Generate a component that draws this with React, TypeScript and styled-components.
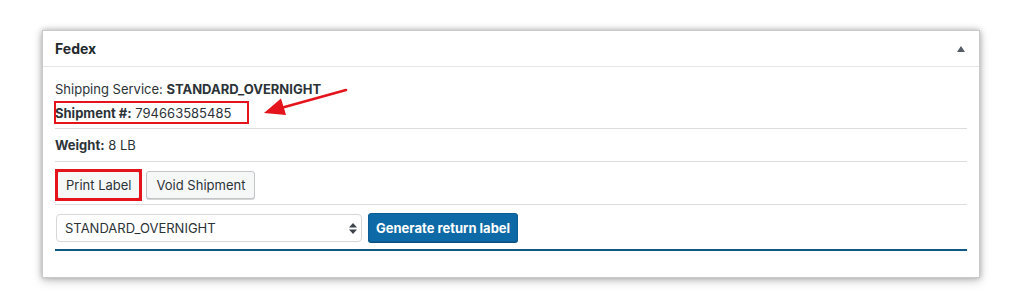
import React from "react"
import styled, { createGlobalStyle } from "styled-components"

const GlobalStyle = createGlobalStyle`
  html, body {
    margin: 0;
    padding: 0;
    background: #ffffff;
  }
  body {
    font-family: Inter, "Noto Sans", "Liberation Sans", sans-serif;
    font-size: 13px;
    color: #2c3338;
  }
`

const Page = styled.div`
  width: 1020px;
  height: 308px;
  padding: 30px 0 0 42px;
  box-sizing: border-box;
`

const Postbox = styled.div`
  width: 938px;
  box-sizing: border-box;
  background: #fff;
  border: 1px solid #c9c9c9;
  box-shadow: 0 0 6px rgba(0, 0, 0, 0.28), 0 3px 10px rgba(0, 0, 0, 0.18);
`

const Header = styled.div`
  height: 35px;
  display: flex;
  align-items: center;
  justify-content: space-between;
  padding: 0 14px 0 12px;
  border-bottom: 1px solid #e2e4e7;
`

const Title = styled.h2`
  margin: 0;
  font-size: 14px;
  font-weight: 700;
  color: #23282d;
`

const Toggle = styled.span`
  width: 0;
  height: 0;
  border-left: 4px solid transparent;
  border-right: 4px solid transparent;
  border-bottom: 6px solid #555d66;
`

const Inside = styled.div`
  padding: 0 12px 26px;
`

const Section = styled.div<{ $top: number; $bottom: number }>`
  position: relative;
  padding: ${(p) => p.$top}px 0 ${(p) => p.$bottom}px;
  border-bottom: 1px solid #dcdcde;
`

const Line = styled.div`
  line-height: 24px;
  height: 24px;
`

const Mark = styled.span`
  position: relative;
  display: inline-block;

  &::after {
    content: "";
    position: absolute;
    left: -1px;
    right: -18px;
    top: 0;
    bottom: 1px;
    border: 2.5px solid #e5141c;
  }
`

const Arrow = styled.svg`
  position: absolute;
  left: 200px;
  top: 18px;
  overflow: visible;
`

const ButtonRow = styled.div`
  display: flex;
  align-items: center;
  gap: 6px;
`

const Button = styled.button<{ $marked?: boolean }>`
  position: relative;
  height: 28px;
  padding: 0 9px;
  font-family: inherit;
  font-size: 13px;
  color: #2c3338;
  background: #f6f7f7;
  border: 1px solid #c3c4c7;
  border-radius: 3px;
  box-shadow: 0 1px 0 #d5d5d5;

  ${(p) =>
    p.$marked &&
    `
    margin-left: 2px;
    padding: 0 8px;
    &::after {
      content: "";
      position: absolute;
      inset: -3px -3px -3px -3px;
      border: 3px solid #e5141c;
    }
  `}
`

const ReturnRow = styled.div`
  display: flex;
  align-items: center;
  gap: 6px;
  padding-top: 8px;
  padding-bottom: 7px;
  border-bottom: 2px solid #11598a;
`

const SelectWrap = styled.div`
  position: relative;
  margin-left: 1px;
`

const Select = styled.select`
  appearance: none;
  width: 306px;
  height: 28px;
  padding: 0 24px 0 8px;
  font-family: inherit;
  font-size: 13px;
  color: #2c3338;
  background: #fff;
  border: 1px solid #d7d7d7;
  border-radius: 4px;
`

const Spinner = styled.svg`
  position: absolute;
  right: 5px;
  top: 9px;
  pointer-events: none;
`

const PrimaryButton = styled.button`
  height: 29px;
  padding: 0 7px;
  font-family: inherit;
  font-size: 13px;
  font-weight: 700;
  color: #fff;
  background: #0e6aa6;
  border: 1px solid #0b5d93;
  border-radius: 3px;
  box-shadow: 0 1px 0 #0a4f7d;
`

const App: React.FC = () => {
  return (
    <>
      <GlobalStyle />
      <Page>
        <Postbox>
          <Header>
            <Title>Fedex</Title>
            <Toggle />
          </Header>
          <Inside>
            <Section $top={10} $bottom={3}>
              <Line>
                Shipping Service: <strong>STANDARD_OVERNIGHT</strong>
              </Line>
              <Line>
                <Mark>
                  <strong>Shipment #:</strong> 794663585485
                </Mark>
              </Line>
              <Arrow width="150" height="35" viewBox="0 0 150 35">
                <line x1="91" y1="5" x2="26" y2="23" stroke="#e5141c" strokeWidth="2.5" strokeLinecap="round" />
                <polygon points="9,28 31,30 26,13.5" fill="#e5141c" />
              </Arrow>
            </Section>
            <Section $top={4} $bottom={4}>
              <Line>
                <strong>Weight:</strong> 8 LB
              </Line>
            </Section>
            <Section $top={9} $bottom={5}>
              <ButtonRow>
                <Button $marked>Print Label</Button>
                <Button>Void Shipment</Button>
              </ButtonRow>
            </Section>
            <ReturnRow>
              <SelectWrap>
                <Select defaultValue="STANDARD_OVERNIGHT">
                  <option>STANDARD_OVERNIGHT</option>
                  <option>PRIORITY_OVERNIGHT</option>
                  <option>FEDEX_GROUND</option>
                </Select>
                <Spinner width="8" height="11" viewBox="0 0 8 11">
                  <polygon points="4,0 8,4.5 0,4.5" fill="#3c434a" />
                  <polygon points="0,6.5 8,6.5 4,11" fill="#3c434a" />
                </Spinner>
              </SelectWrap>
              <PrimaryButton>Generate return label</PrimaryButton>
            </ReturnRow>
          </Inside>
        </Postbox>
      </Page>
    </>
  )
}

export default App
